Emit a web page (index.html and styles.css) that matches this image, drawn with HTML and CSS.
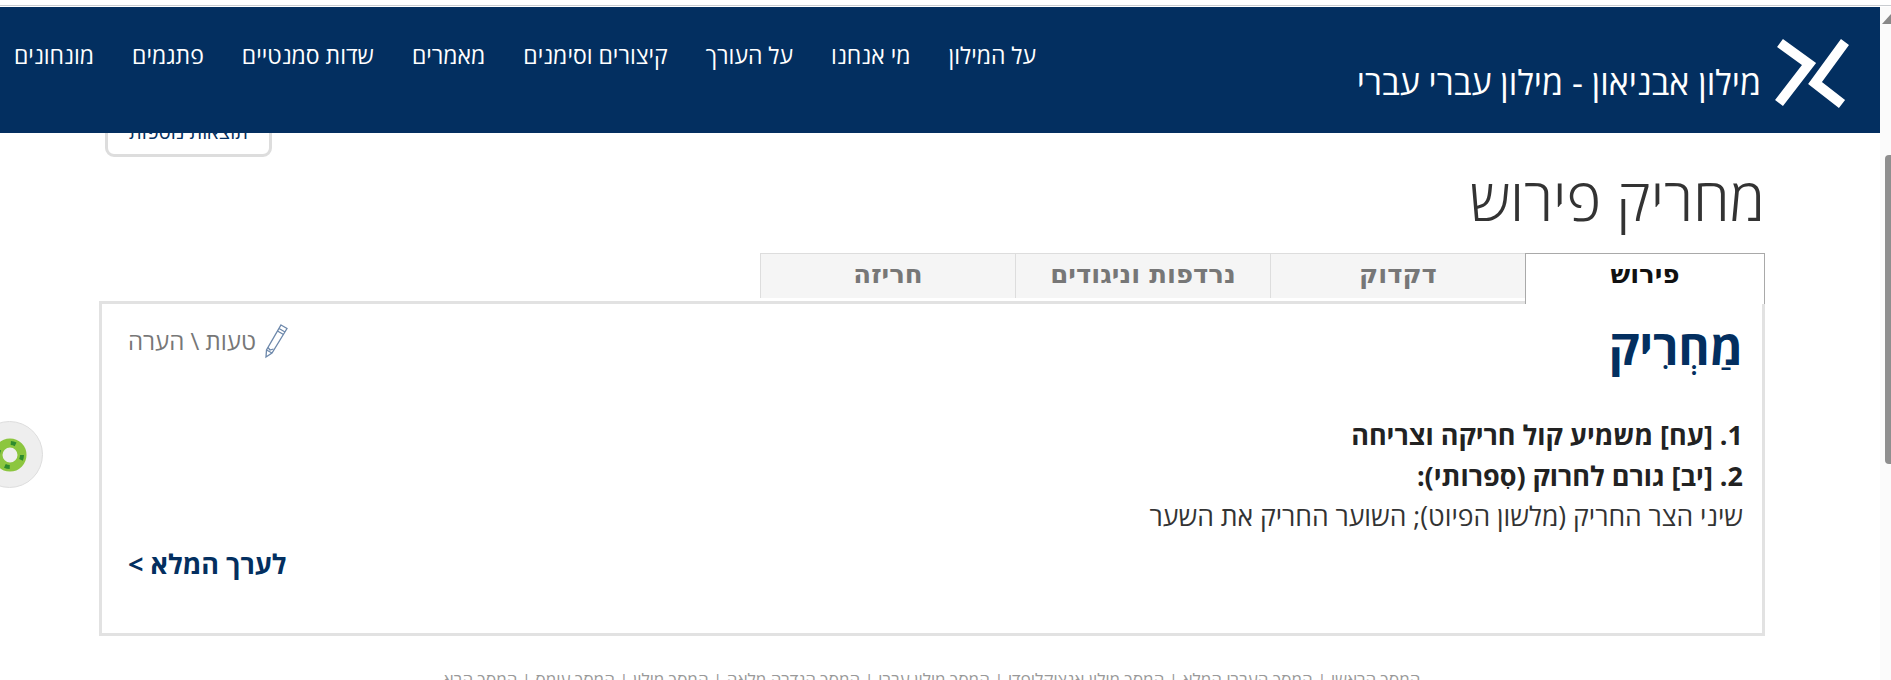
FILE: index.html
```html
<!DOCTYPE html>
<html lang="he" dir="rtl">
<head>
  <meta charset="UTF-8">
  <meta name="viewport" content="width=device-width, initial-scale=1.0">
  <title>מחריק פירוש</title>
  <link rel="stylesheet" href="styles.css">
</head>
<body>
  <header class="site-header">
    <a href="#" class="brand">
      <svg class="brand-logo" viewBox="0 0 74 72" width="74" height="72" aria-hidden="true">
        <path d="M5 6 L34 27 L4 66" />
        <path d="M70 5 L40 46 L67 67" />
      </svg>
      <span class="brand-name">מילון אבניאון - מילון עברי עברי</span>
    </a>
    <nav class="main-nav">
      <a href="#">על המילון</a>
      <a href="#">מי אנחנו</a>
      <a href="#">על העורך</a>
      <a href="#">קיצורים וסימנים</a>
      <a href="#">מאמרים</a>
      <a href="#">שדות סמנטיים</a>
      <a href="#">פתגמים</a>
      <a href="#">מונחונים</a>
    </nav>
  </header>

  <main class="page">
    <div class="more-row">
      <a href="#" class="more-results">תוצאות נוספות</a>
    </div>

    <h1 class="page-title">מחריק פירוש</h1>

    <div class="tabs">
      <a href="#" class="tab tab-active">פירוש</a>
      <a href="#" class="tab">דקדוק</a>
      <a href="#" class="tab">נרדפות וניגודים</a>
      <a href="#" class="tab">חריזה</a>
    </div>

    <section class="entry">
      <div class="entry-head">
        <h2 class="headword">מַחְרִיק</h2>
        <a href="#" class="report">
          <svg class="pencil" viewBox="0 0 24 36" width="24" height="36" aria-hidden="true">
            <path d="M17 2 L23 5.500 L8 30 L2 34 L2.500 27 Z" />
            <path d="M15 5.500 L21 9 M13.500 8 L19.500 11.500 M2.500 27 L8 30 M4 24.500 L6 27 L9.500 26" />
          </svg>
          <span>טעות \ הערה</span>
        </a>
      </div>

      <p class="sense">1. [עח] משמיע קול חריקה וצריחה</p>
      <p class="sense">2. [יב] גורם לחרוק (סִפרותי):</p>
      <p class="example">שיני הצר החריק (מלשון הפיוט); השוער החריק את השער</p>

      <a href="#" class="full-entry">לערך המלא &gt;</a>
    </section>

    <footer class="site-footer">
      <a href="#">המסך הראשי</a> | <a href="#">המסך העברי המלא</a> | <a href="#">המסך מילון אנציקלופדי</a> | <a href="#">המסך מילון עברי</a> | <a href="#">המסך הגדרה מלאה</a> | <a href="#">המסך מילון</a> | <a href="#">המסך עומס</a> | <a href="#">המסך הבא</a>
    </footer>
  </main>

  <button class="side-widget" aria-label="נגישות">
    <svg viewBox="0 0 36 36" width="36" height="36" aria-hidden="true">
      <circle class="ring" cx="18" cy="18" r="12" />
      <circle class="ring-dash" cx="18" cy="18" r="12" />
    </svg>
  </button>

  <div class="scrollbar">
    <span class="scroll-arrow"></span>
    <span class="scroll-thumb"></span>
  </div>
</body>
</html>
```

FILE: styles.css
```css
html, body {
  height: 100%;
  overflow: hidden;
}

body {
  margin: 0;
  background: #fff;
  color: #333;
  font-family: "Open Sans", "Liberation Sans", sans-serif;
  border-top: 6px solid transparent;
}

body::before {
  content: "";
  position: fixed;
  top: 5px;
  left: 0;
  right: 0;
  height: 1px;
  background: #c9ccd0;
}

a {
  text-decoration: none;
  color: inherit;
}

.site-header {
  position: fixed;
  top: 7px;
  left: 0;
  right: 11px;
  height: 126px;
  z-index: 5;
  background: #032f60;
  color: #fff;
  display: flex;
  justify-content: space-between;
  padding: 0 31px 0 14px;
}

.brand {
  display: flex;
  align-items: flex-start;
  gap: 14px;
  padding-top: 30px;
}

.brand-logo {
  flex: none;
}

.brand-logo path {
  fill: none;
  stroke: #fff;
  stroke-width: 10;
  stroke-linejoin: miter;
}

.brand-name {
  font-size: 34px;
  line-height: 40px;
  margin-top: 25px;
  white-space: nowrap;
}

.main-nav {
  display: flex;
  gap: 38px;
  padding-top: 28px;
  font-size: 23px;
  line-height: 40px;
  white-space: nowrap;
}

.page {
  margin: 0 126px 0 99px;
  padding-top: 94px;
}

.more-row {
  display: flex;
  justify-content: flex-end;
  padding-left: 6px;
}

.more-results {
  width: 161px;
  height: 51px;
  border: 3px solid #ddd;
  border-radius: 9px;
  color: #032f60;
  font-size: 20px;
  line-height: 58px;
  text-align: center;
  white-space: nowrap;
}

.page-title {
  margin: 0;
  font-size: 59px;
  line-height: 82px;
  font-weight: 300;
  color: #333;
}

.tabs {
  display: flex;
  margin-top: 14px;
}

.tab {
  box-sizing: border-box;
  width: 255px;
  height: 45px;
  margin-bottom: 3px;
  background: #f5f5f5;
  border: 1px solid #ddd;
  border-bottom: none;
  border-right: none;
  color: #777;
  font-family: "DejaVu Sans", sans-serif;
  font-size: 26px;
  font-weight: 700;
  line-height: 40px;
  text-align: center;
}

.tab-active {
  width: 240px;
  height: 51px;
  margin-bottom: -3px;
  position: relative;
  background: #fff;
  border: 1px solid #a9a9a9;
  border-bottom: none;
  color: #111;
}

.entry {
  box-sizing: border-box;
  height: 335px;
  border: 3px solid #e2e2e2;
  padding: 13px 19px 0 26px;
}

.entry-head {
  display: flex;
  justify-content: space-between;
  align-items: flex-start;
  margin-bottom: 37px;
}

.headword {
  margin: 0;
  font-size: 48px;
  line-height: 60px;
  font-weight: 700;
  color: #032f60;
}

.report {
  display: flex;
  align-items: center;
  gap: 8px;
  margin-top: 6px;
  color: #777;
  font-size: 24px;
  line-height: 36px;
}

.pencil path {
  fill: none;
  stroke: #6d88ab;
  stroke-width: 1.300;
}

.sense,
.example {
  margin: 0;
  font-size: 27px;
  line-height: 41px;
}

.example {
  font-size: 26.500px;
}

.sense {
  font-weight: 700;
  color: #222;
}

.full-entry {
  display: block;
  margin-top: 6px;
  font-size: 27px;
  line-height: 41px;
  font-weight: 700;
  color: #032f60;
  text-align: left;
}

.site-footer {
  margin-top: 35px;
  font-size: 17px;
  line-height: 18px;
  color: #999;
  text-align: center;
}

.side-widget {
  position: fixed;
  left: -24px;
  top: 421px;
  width: 67px;
  height: 67px;
  padding: 0;
  border: 1px solid #ddd;
  border-radius: 50%;
  background: #eee;
  display: flex;
  align-items: center;
  justify-content: center;
}

.ring {
  fill: none;
  stroke: #8cc63f;
  stroke-width: 9;
}

.ring-dash {
  fill: none;
  stroke: #2e8b2e;
  stroke-width: 4;
  stroke-dasharray: 5 14;
}

.scrollbar {
  position: fixed;
  top: 7px;
  right: 0;
  bottom: 0;
  width: 11px;
  background: #fbfbfb;
}

.scroll-arrow {
  position: absolute;
  top: 7px;
  left: 2px;
  width: 0;
  height: 0;
  border-left: 9px solid transparent;
  border-right: 9px solid transparent;
  border-bottom: 10px solid #888;
}

.scroll-thumb {
  position: absolute;
  top: 148px;
  left: 5px;
  width: 6px;
  height: 309px;
  background: #8f8f8f;
  border-radius: 4px 0 0 4px;
}
```
